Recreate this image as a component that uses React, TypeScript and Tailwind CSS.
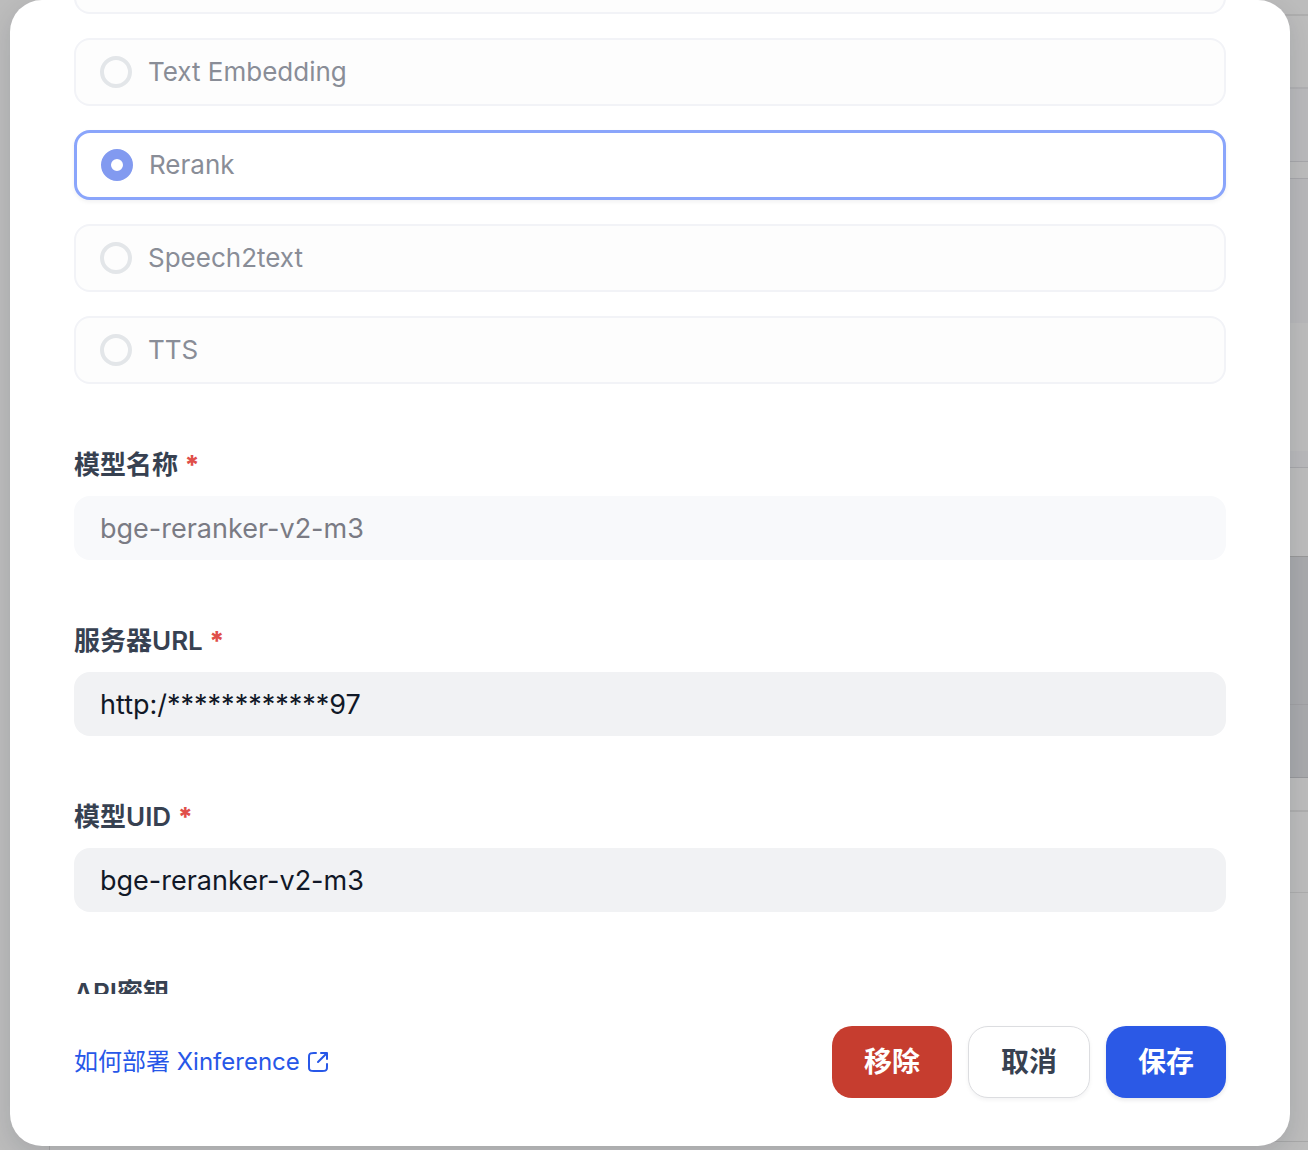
import { useState } from "react";

const radioOptions = ["Text Embedding", "Rerank", "Speech2text", "TTS"];

const fields = [
  { id: "model-name", label: "模型名称", value: "bge-reranker-v2-m3", disabled: true },
  { id: "server-url", label: "服务器URL", value: "http:/************97", disabled: false },
  { id: "model-uid", label: "模型UID", value: "bge-reranker-v2-m3", disabled: false },
];

function PageBehind() {
  return (
    <div aria-hidden="true" className="col-start-1 row-start-1 flex min-h-0 overflow-hidden bg-[#bcbcbc]">
      <div className="w-[50px] border-r border-[#a6a6a6]" />
      <div className="flex flex-1 flex-col">
        <div className="h-4 border-b-2 border-[#aeaeae]" />
        <div className="h-[73px] border-b-2 border-[#b0b0b2]" />
        <div className="h-[73px] border-b border-[#a7a7aa] bg-[#b9b9bb]" />
        <div className="h-4" />
        <div className="h-[145px] border-t border-[#a7a7aa] bg-[#b7b7b9]" />
        <div className="h-32" />
        <div className="h-[17px] border-b border-[#a7a7aa] bg-[#b8b8ba]" />
        <div className="h-[88px]" />
        <div className="h-[149px] border-y border-t-[#989898] border-b-[#a0a0a3] bg-[#a8a9ac]" />
        <div className="h-[73px] border-b border-[#97989b] bg-[#a8a9ac]" />
        <div className="h-[34px] border-b-2 border-[#aeaeae]" />
        <div className="h-[81px] border-b border-[#adadad]" />
        <div className="h-[249px] border-b border-[#a8a8a8]" />
      </div>
    </div>
  );
}

function ExternalLinkIcon() {
  return (
    <svg className="size-6" viewBox="0 0 12 12" fill="none" stroke="currentColor" strokeLinecap="round" strokeLinejoin="round" aria-hidden="true">
      <path d="M10.5 4.5L10.5 1.5M10.5 1.5H7.5M10.5 1.5L6 6M5 1.5H3.9C3.06 1.5 2.64 1.5 2.319 1.663C2.037 1.807 1.807 2.037 1.663 2.319C1.5 2.64 1.5 3.06 1.5 3.9V8.1C1.5 8.94 1.5 9.36 1.663 9.681C1.807 9.963 2.037 10.193 2.319 10.337C2.64 10.5 3.06 10.5 3.9 10.5H8.1C8.94 10.5 9.36 10.5 9.681 10.337C9.963 10.193 10.193 9.963 10.337 9.681C10.5 9.36 10.5 8.94 10.5 8.1V7" />
    </svg>
  );
}

export default function App() {
  const [values, setValues] = useState<Record<string, string>>(
    Object.fromEntries(fields.map((f) => [f.id, f.value])),
  );

  return (
    <div className="grid h-screen grid-cols-1 grid-rows-1 overflow-hidden font-['Inter','Noto_Sans_CJK_SC',sans-serif]">
      <PageBehind />
      <form
        role="dialog"
        aria-label="Xinference"
        onSubmit={(e) => e.preventDefault()}
        className="z-10 col-start-1 row-start-1 mr-[18px] mb-1 ml-[10px] flex min-h-0 flex-col overflow-hidden rounded-[32px] bg-white shadow-[0_8px_24px_rgba(16,24,40,0.12)]"
      >
        <div className="min-h-0 flex-1 overflow-hidden px-16">
          <div className="flex flex-col gap-6" role="radiogroup" aria-label="模型类型">
            <div className="-mt-[54px] h-[68px] rounded-2xl border-2 border-[#f2f3f7] bg-[#fdfdfd]" />
            {radioOptions.map((name) => (
              <label
                key={name}
                className="flex items-center gap-4 rounded-2xl border-2 border-[#f2f3f7] bg-[#fdfdfd] px-6 py-4 text-[26px] leading-8 text-[#898d97] has-checked:border-[3px] has-checked:border-[#8aa5fb] has-checked:bg-white has-checked:shadow-[0_2px_4px_rgba(16,24,40,0.06)]"
              >
                <input
                  type="radio"
                  name="model-type"
                  defaultChecked={name === "Rerank"}
                  disabled
                  className="size-8 shrink-0 appearance-none rounded-full border-4 border-[#e3e6e9] checked:border-[10px] checked:border-[#829af0] checked:bg-white"
                />
                {name}
              </label>
            ))}
          </div>

          {fields.map((f) => (
            <div key={f.id} className="flex flex-col gap-3.5 pt-16">
              <label htmlFor={f.id} className="text-[26px] leading-[34px] font-semibold text-[#374151]">
                {f.label} <span className="font-extrabold text-[#e04f4a]">*</span>
              </label>
              <input
                id={f.id}
                type="text"
                disabled={f.disabled}
                value={values[f.id]}
                onChange={(e) => setValues({ ...values, [f.id]: e.target.value })}
                className="h-16 w-full rounded-2xl bg-[#f1f2f4] px-[26px] text-[27px] text-[#111827] outline-none disabled:bg-[#f8f9fb] disabled:text-[#7a7b84]"
              />
            </div>
          ))}

          <div className="pt-16 text-[26px] leading-[34px] font-semibold text-[#374151]">API密钥</div>
        </div>

        <div className="flex items-center justify-between px-16 pt-8 pb-12">
          <a href="#deploy" className="flex items-center gap-1.5 text-2xl text-[#2757e8]">
            如何部署 Xinference
            <ExternalLinkIcon />
          </a>
          <div className="flex gap-4 text-[28px] leading-10 font-bold">
            <button type="button" className="rounded-[20px] bg-[#c63d2f] px-8 py-4 text-white">
              移除
            </button>
            <button
              type="button"
              className="rounded-[20px] border border-[#dcdde0] bg-white px-8 text-[#374151] shadow-[0_2px_4px_rgba(16,24,40,0.05)]"
            >
              取消
            </button>
            <button type="submit" className="rounded-[20px] bg-[#2b59e6] px-8 py-4 text-white shadow-[0_2px_4px_rgba(16,24,40,0.1)]">
              保存
            </button>
          </div>
        </div>
      </form>
    </div>
  );
}
